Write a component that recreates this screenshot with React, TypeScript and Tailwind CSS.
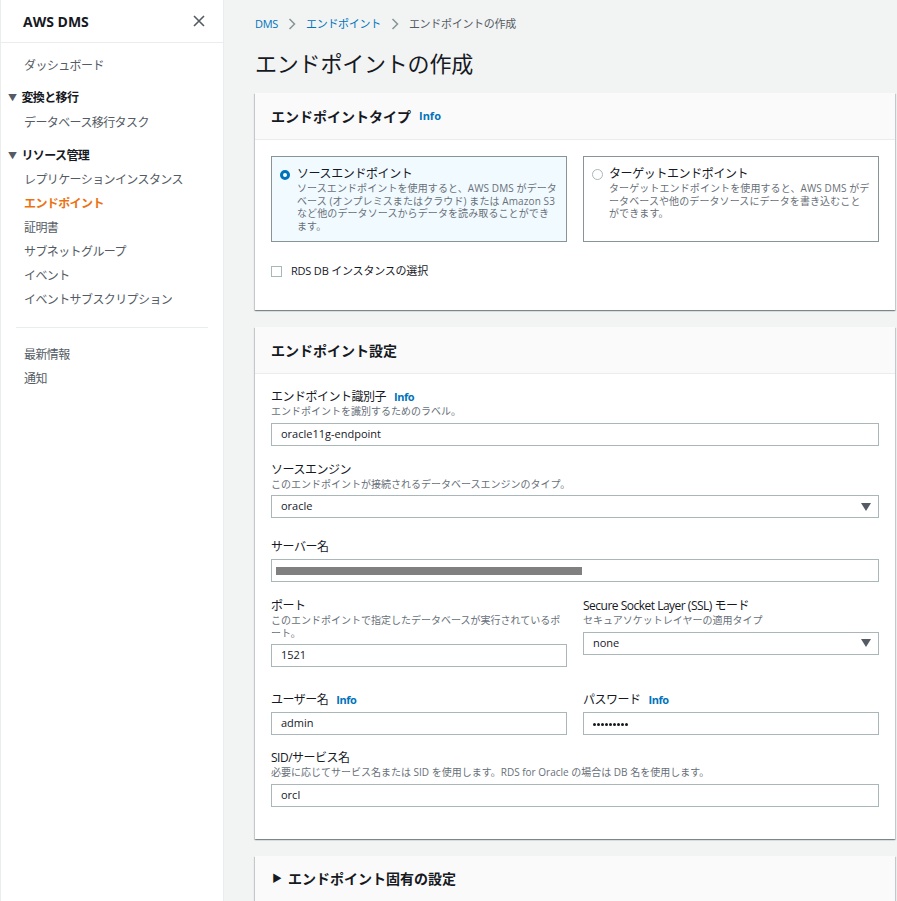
import React from "react";

const font = { fontFamily: '"Open Sans", "Noto Sans CJK JP", sans-serif' };

function Info() {
  return <span className="ml-2 text-[11px] font-bold text-[#0073bb]">Info</span>;
}

function Caret() {
  return (
    <svg width="10" height="8" viewBox="0 0 10 8" className="shrink-0">
      <path d="M0 0 H10 L5 8 Z" fill="#545b64" />
    </svg>
  );
}

function Chevron() {
  return (
    <svg width="8" height="12" viewBox="0 0 8 12" className="mx-[10px]">
      <path d="M1.5 1 L6.5 6 L1.5 11" stroke="#879596" strokeWidth="1.5" fill="none" />
    </svg>
  );
}

function Sidebar() {
  const item = "h-6 flex items-center pl-[23px] text-[12px] tracking-[-0.6px] text-[#545b64]";
  const section = "h-6 flex items-center pl-[7px] text-[12px] font-bold tracking-[-0.6px] text-[#16191f]";
  return (
    <div className="w-[224px] shrink-0 bg-white border-l border-[#c8d2dd] border-r border-[#eaeded] min-h-[901px]">
      <div className="h-[43px] flex items-center justify-between pl-[22px] pr-[18px] border-b border-[#eaeded]">
        <span className="text-[14px] font-bold text-[#16191f]">AWS DMS</span>
        <svg width="12" height="12" viewBox="0 0 12 12">
          <path d="M1 1 L11 11 M11 1 L1 11" stroke="#545b64" strokeWidth="1.6" />
        </svg>
      </div>
      <div className="pt-[11px]">
        <div className={item}>ダッシュボード</div>
        <div className={section + " mt-[8px]"}>
          <span className="text-[9px] mr-[5px] text-[#545b64]">▼</span>変換と移行
        </div>
        <div className={item + " mt-[1px]"}>データベース移行タスク</div>
        <div className={section + " mt-[9px]"}>
          <span className="text-[9px] mr-[5px] text-[#545b64]">▼</span>リソース管理
        </div>
        <div className={item}>レプリケーションインスタンス</div>
        <div className={item + " !text-[#ec7211] font-bold"}>エンドポイント</div>
        <div className={item}>証明書</div>
        <div className={item}>サブネットグループ</div>
        <div className={item}>イベント</div>
        <div className={item}>イベントサブスクリプション</div>
      </div>
      <div className="mx-[15px] mt-[15px] mb-[15px] border-t border-[#eaeded]" />
      <div>
        <div className={item}>最新情報</div>
        <div className={item}>通知</div>
      </div>
    </div>
  );
}

function Label({ text, info, desc }: { text: string; info?: boolean; desc?: React.ReactNode }) {
  return (
    <div>
      <div className="h-[14px] leading-[14px] text-[12px] tracking-[-0.5px] text-[#16191f] flex items-center">
        {text}
        {info && <Info />}
      </div>
      {desc && <div className="text-[10px] leading-[12.5px] text-[#687078] mt-[1px]">{desc}</div>}
    </div>
  );
}

function Input({ value, className = "" }: { value: React.ReactNode; className?: string }) {
  return (
    <div className={"h-[23px] border border-[#aab7b8] bg-white flex items-center px-[9px] text-[11px] text-[#16191f] " + className}>
      {value}
    </div>
  );
}

function Select({ value, className = "" }: { value: string; className?: string }) {
  return (
    <div className={"h-[23px] border border-[#aab7b8] bg-white flex items-center justify-between pl-[9px] pr-[7px] text-[11px] text-[#16191f] " + className}>
      <span>{value}</span>
      <Caret />
    </div>
  );
}

const cardShadow =
  "shadow-[0_1px_1px_0_rgba(0,28,36,0.3),1px_1px_1px_0_rgba(0,28,36,0.15),-1px_1px_1px_0_rgba(0,28,36,0.15)]";

function CardHeader({ children }: { children: React.ReactNode }) {
  return (
    <div className="h-[47px] bg-[#fafafa] border-b border-[#eaeded] flex items-center px-4 text-[14px] font-bold text-[#16191f]">
      {children}
    </div>
  );
}

export default function App() {
  return (
    <div className="flex bg-[#f2f3f3] min-h-[901px] w-[897px] overflow-hidden" style={font}>
      <Sidebar />
      <main className="flex-1 pl-[31px] pr-[2px]">
        {/* breadcrumb */}
        <div className="h-[46px] flex items-center text-[11px] tracking-[-0.3px] pt-[2px]">
          <span className="text-[#0073bb]">DMS</span>
          <Chevron />
          <span className="text-[#0073bb]">エンドポイント</span>
          <Chevron />
          <span className="text-[#545b64]">エンドポイントの作成</span>
        </div>
        <h1 className="text-[22px] leading-[34px] text-[#16191f] tracking-[-0.2px] mb-[13px]">エンドポイントの作成</h1>

        {/* endpoint type */}
        <section className={"bg-white " + cardShadow}>
          <CardHeader>
            エンドポイントタイプ<Info />
          </CardHeader>
          <div className="px-4 pt-[16px] pb-[32px]">
            <div className="grid grid-cols-2 gap-4">
              <div className="h-[86px] border border-[#879596] bg-[#f1faff] flex pl-[8px] pr-[8px] pt-[9px]">
                <div className="w-[10px] h-[10px] rounded-full border-[3px] border-[#0073bb] bg-white mt-[4px] mr-[7px] shrink-0" />
                <div>
                  <div className="text-[12px] leading-[16px] text-[#16191f] tracking-[-0.4px]">ソースエンドポイント</div>
                  <div className="text-[10px] leading-[12.7px] text-[#687078] tracking-[0.1px]">
                    ソースエンドポイントを使用すると、AWS DMS がデータベース (オンプレミスまたはクラウド) または Amazon S3 など他のデータソースからデータを読み取ることができます。
                  </div>
                </div>
              </div>
              <div className="h-[86px] border border-[#879596] bg-white flex pl-[8px] pr-[8px] pt-[9px]">
                <div className="w-[11px] h-[11px] rounded-full border border-[#aab7b8] bg-white mt-[3px] mr-[6px] shrink-0" />
                <div>
                  <div className="text-[12px] leading-[16px] text-[#16191f] tracking-[-0.4px]">ターゲットエンドポイント</div>
                  <div className="text-[10px] leading-[12.7px] text-[#687078] tracking-[0.1px]">
                    ターゲットエンドポイントを使用すると、AWS DMS がデータベースや他のデータソースにデータを書き込むことができます。
                  </div>
                </div>
              </div>
            </div>
            <div className="flex items-center mt-[22px] h-[14px]">
              <div className="w-[11px] h-[11px] border border-[#aab7b8] bg-white mr-[9px]" />
              <span className="text-[11px] text-[#16191f] tracking-[-0.2px]">RDS DB インスタンスの選択</span>
            </div>
          </div>
        </section>

        {/* endpoint settings */}
        <section className={"bg-white mt-[17px] " + cardShadow}>
          <CardHeader>エンドポイント設定</CardHeader>
          <div className="px-4 pt-[16px] pb-[32px]">
            <Label text="エンドポイント識別子" info desc="エンドポイントを識別するためのラベル。" />
            <Input value="oracle11g-endpoint" className="mt-[5px]" />

            <div className="mt-[17px]">
              <Label text="ソースエンジン" desc="このエンドポイントが接続されるデータベースエンジンのタイプ。" />
              <Select value="oracle" className="mt-[5px]" />
            </div>

            <div className="mt-[22px]">
              <Label text="サーバー名" />
              <Input className="mt-[5px]" value={<div className="h-[8px] w-[306px] bg-[#808080] -ml-[5px]" />} />
            </div>

            <div className="grid grid-cols-2 gap-4 mt-[17px]">
              <div>
                <Label text="ポート" desc="このエンドポイントで指定したデータベースが実行されているポート。" />
                <Input value="1521" className="mt-[5px]" />
              </div>
              <div>
                <Label text="Secure Socket Layer (SSL) モード" desc="セキュアソケットレイヤーの適用タイプ" />
                <Select value="none" className="mt-[5px]" />
              </div>
            </div>

            <div className="grid grid-cols-2 gap-4 mt-[26px]">
              <div>
                <Label text="ユーザー名" info />
                <Input value="admin" className="mt-[5px]" />
              </div>
              <div>
                <Label text="パスワード" info />
                <Input
                  value={
                    <div className="flex gap-[1px] pt-[1px]">
                      {Array.from({ length: 9 }).map((_, i) => (
                        <span key={i} className="w-[3px] h-[3px] rounded-full bg-[#16191f]" />
                      ))}
                    </div>
                  }
                  className="mt-[5px]"
                />
              </div>
            </div>

            <div className="mt-[16px]">
              <Label text="SID/サービス名" desc="必要に応じてサービス名または SID を使用します。RDS for Oracle の場合は DB 名を使用します。" />
              <Input value="orcl" className="mt-[5px]" />
            </div>
          </div>
        </section>

        {/* endpoint specific */}
        <section className={"bg-white mt-[17px] " + cardShadow}>
          <CardHeader>
            <span className="text-[10px] mr-[6px] ml-[1px]">▶</span>エンドポイント固有の設定
          </CardHeader>
        </section>
      </main>
    </div>
  );
}
